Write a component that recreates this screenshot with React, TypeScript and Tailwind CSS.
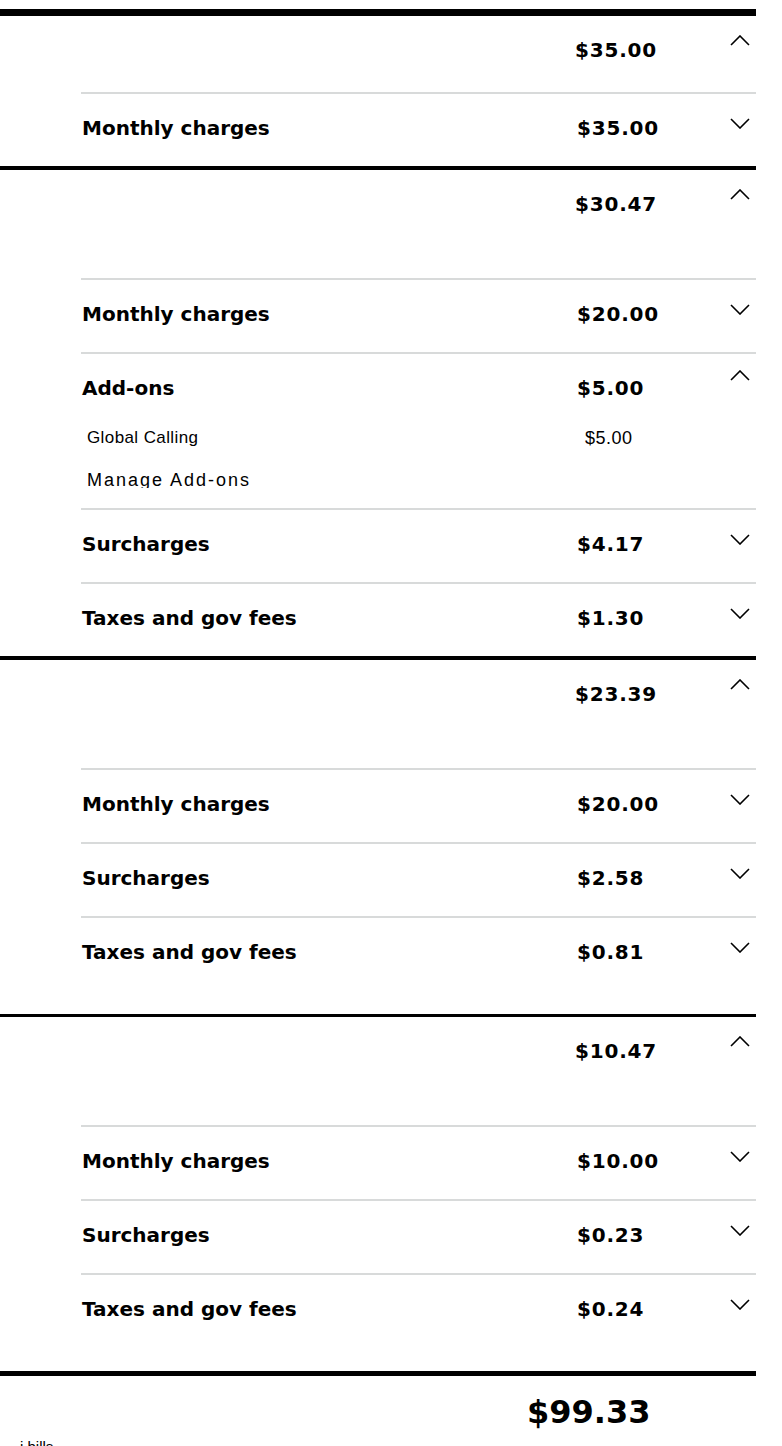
import type { ReactNode } from "react";

type Line = { readonly label: string; readonly amount: string };

type Section = {
  readonly total: string;
  readonly border: string;
  readonly headerHeight: string;
  readonly bottomPad: string;
  readonly lines: ReadonlyArray<Line>;
  readonly withAddOns?: boolean;
};

const sections: ReadonlyArray<Section> = [
  {
    total: "$35.00",
    border: "border-t-[7px]",
    headerHeight: "h-[76px]",
    bottomPad: "pb-0",
    lines: [{ label: "Monthly charges", amount: "$35.00" }],
  },
  {
    total: "$30.47",
    border: "border-t-4",
    headerHeight: "h-[108px]",
    bottomPad: "pb-0",
    withAddOns: true,
    lines: [
      { label: "Monthly charges", amount: "$20.00" },
      { label: "Surcharges", amount: "$4.17" },
      { label: "Taxes and gov fees", amount: "$1.30" },
    ],
  },
  {
    total: "$23.39",
    border: "border-t-4",
    headerHeight: "h-[108px]",
    bottomPad: "pb-[24px]",
    lines: [
      { label: "Monthly charges", amount: "$20.00" },
      { label: "Surcharges", amount: "$2.58" },
      { label: "Taxes and gov fees", amount: "$0.81" },
    ],
  },
  {
    total: "$10.47",
    border: "border-t-[3px]",
    headerHeight: "h-[108px]",
    bottomPad: "pb-[24px]",
    lines: [
      { label: "Monthly charges", amount: "$10.00" },
      { label: "Surcharges", amount: "$0.23" },
      { label: "Taxes and gov fees", amount: "$0.24" },
    ],
  },
];

const boldFont = "font-['DejaVu_Sans',sans-serif] font-bold text-[20px] leading-6";
const amountFont = `${boldFont} tracking-[0.8px]`;

function Chevron({ up }: { readonly up?: boolean }) {
  return (
    <svg className="block" fill="none" height="11" viewBox="0 0 20 11" width="20">
      <path
        d={up ? "M1 10 L10 1 L19 10" : "M1 1 L10 10 L19 1"}
        stroke="#000"
        strokeWidth="1.6"
      />
    </svg>
  );
}

function Row({ children }: { readonly children: ReactNode }) {
  return (
    <div className="ml-[81px] w-[675px] border-t-2 border-[#d8dada]">{children}</div>
  );
}

function LineRow({ line }: { readonly line: Line }) {
  return (
    <Row>
      <div className="flex h-[72px] items-start">
        <div className={`w-[496px] pl-px pt-[22px] ${boldFont}`}>{line.label}</div>
        <div className={`w-[153px] pt-[22px] ${amountFont}`}>{line.amount}</div>
        <div className="mt-[24px] w-5">
          <Chevron />
        </div>
      </div>
    </Row>
  );
}

function AddOnsRow() {
  return (
    <Row>
      <div className="h-[154px]">
        <div className="flex items-start">
          <div className={`w-[496px] pl-px pt-[22px] ${boldFont}`}>Add-ons</div>
          <div className={`w-[153px] pt-[22px] ${amountFont}`}>$5.00</div>
          <div className="mt-[16px] w-5">
            <Chevron up />
          </div>
        </div>
        <div className="mt-[28px] flex items-center font-['Liberation_Sans',sans-serif] leading-5">
          <div className="w-[504px] pl-[6px] text-[17px] tracking-[0.4px]">Global Calling</div>
          <div className="text-[18px] tracking-[0.5px]">$5.00</div>
        </div>
        <div className="mt-[21px] h-[19px] overflow-hidden pl-[6px] font-['Liberation_Sans',sans-serif] text-[18px] leading-[22px] tracking-[2px]">
          Manage Add-ons
        </div>
      </div>
    </Row>
  );
}

function BillSection({ section }: { readonly section: Section }) {
  const [first, ...rest] = section.lines;
  return (
    <section className={`w-[756px] border-black ${section.border} ${section.bottomPad}`}>
      <div className={`flex items-start ${section.headerHeight}`}>
        <div className="w-[575px]" />
        <div className={`w-[155px] pt-[22px] ${amountFont}`}>{section.total}</div>
        <div className="mt-[19px] w-5">
          <Chevron up />
        </div>
      </div>
      <LineRow line={first} />
      {section.withAddOns ? <AddOnsRow /> : null}
      {rest.map((line) => (
        <LineRow key={line.label} line={line} />
      ))}
    </section>
  );
}

export default function App() {
  return (
    <div className="h-[1446px] overflow-hidden bg-white pt-[9px] text-black">
      {sections.map((section) => (
        <BillSection key={section.total} section={section} />
      ))}
      <div className="w-[756px] border-t-[5px] border-black">
        <div className="flex pt-[17px]">
          <div className="w-[527px]" />
          <div className="font-['DejaVu_Sans',sans-serif] text-[32px] font-bold leading-[38px]">
            $99.33
          </div>
        </div>
        <div className="pl-[20px] pt-[6px] font-['Liberation_Sans',sans-serif] text-[15px] leading-5">
          i bills
        </div>
      </div>
    </div>
  );
}
